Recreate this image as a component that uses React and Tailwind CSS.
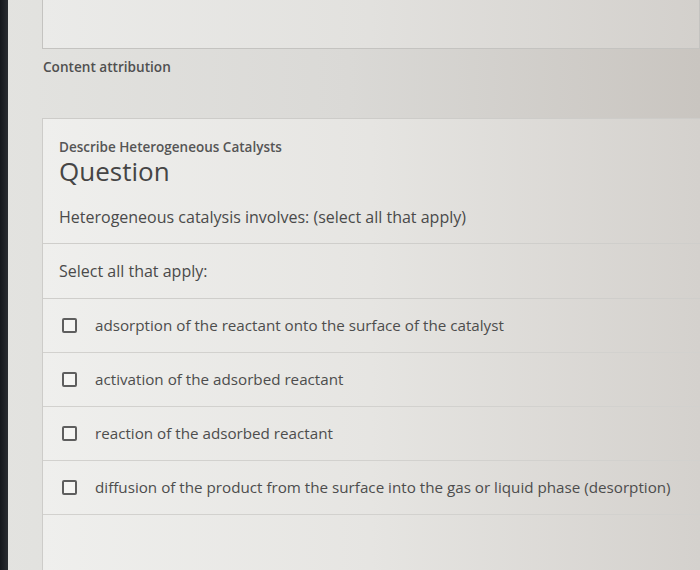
const options = [
  "adsorption of the reactant onto the surface of the catalyst",
  "activation of the adsorbed reactant",
  "reaction of the adsorbed reactant",
  "diffusion of the product from the surface into the gas or liquid phase (desorption)",
];

const Checkbox = () => (
  <span className="block w-[15px] h-[15px] shrink-0 border-2 border-[#5e5e5e] rounded-[2px] bg-white/40"></span>
);

export default function App() {
  return (
    <div
      className="w-[700px] h-[570px] overflow-hidden flex bg-gradient-to-r from-[#e3e3e0] via-[#dad9d6] to-[#c9c5c0] text-[#555]"
      style={{ fontFamily: '"Open Sans", "Noto Sans", sans-serif' }}
    >
      <div className="w-[8px] shrink-0 bg-gradient-to-r from-[#15181c] to-[#2a2d31]"></div>
      <div className="flex-1 flex flex-col pl-[34px]">
        <div className="h-[50px] -mt-px border border-[#c4c3c0] bg-gradient-to-r from-[#ebebe9] via-[#e2e1de] to-[#d3d0cc]"></div>

        <div className="pt-[9px] pl-[1px] text-[13.6px] font-semibold text-[#505050] leading-[18px]">
          Content attribution
        </div>

        <div className="mt-[42px] flex-1 border-l border-t border-[#cdccc9] bg-gradient-to-r from-[#efefed] via-[#e6e5e2] to-[#d4d1cd]">
          <div className="pl-[16px] pt-[20px] pb-[15px] border-b border-[#cfcecb]">
            <div className="text-[13.5px] font-semibold text-[#555] leading-[16px]">
              Describe Heterogeneous Catalysts
            </div>
            <div className="text-[26px] text-[#454545] leading-[32px]">Question</div>
            <div className="text-[16px] text-[#4a4a4a] leading-[22px] mt-[19px]">
              Heterogeneous catalysis involves: (select all that apply)
            </div>
          </div>

          <div className="h-[55px] flex items-center pl-[16px] text-[16px] text-[#4a4a4a] border-b border-[#cfcecb]">
            Select all that apply:
          </div>

          {options.map((o) => (
            <div
              key={o}
              className="h-[54px] flex items-center pl-[19px] border-b border-[#d2d1ce]"
            >
              <Checkbox />
              <span className="ml-[18px] text-[15.2px] text-[#4d4d4d] whitespace-nowrap">{o}</span>
            </div>
          ))}
        </div>
      </div>
    </div>
  );
}
